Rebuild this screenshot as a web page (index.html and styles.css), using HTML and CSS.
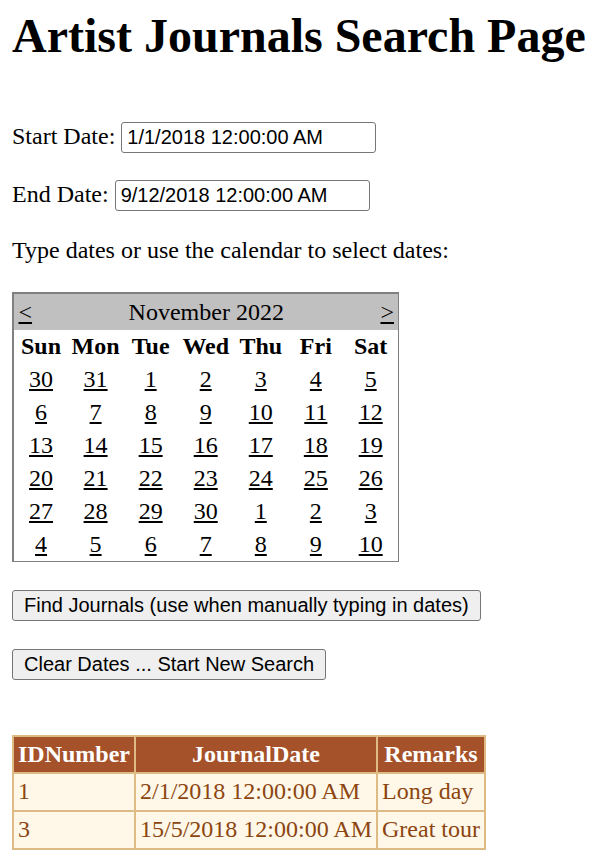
FILE: index.html
```html
<!DOCTYPE html>
<html>
<head>
<meta charset="utf-8">
<title>Artist Journals Search Page</title>
<link rel="stylesheet" href="styles.css">
</head>
<body>
<h1 class="title">Artist Journals Search Page</h1>
<p class="field field-start">Start Date: <input class="date-input" type="text" value="1/1/2018 12:00:00 AM"></p>
<p class="field field-end">End Date: <input class="date-input" type="text" value="9/12/2018 12:00:00 AM"></p>
<p class="hint">Type dates or use the calendar to select dates:</p>
<table class="calendar">
  <tr class="cal-title-row">
    <td colspan="7" class="cal-title">
      <div class="cal-title-inner">
        <a class="cal-link" href="#">&lt;</a>
        <span class="cal-month">November 2022</span>
        <a class="cal-link" href="#">&gt;</a>
      </div>
    </td>
  </tr>
  <tr class="cal-head">
    <th>Sun</th><th>Mon</th><th>Tue</th><th>Wed</th><th>Thu</th><th>Fri</th><th>Sat</th>
  </tr>
  <tr class="cal-week">
    <td><a class="cal-link" href="#">30</a></td><td><a class="cal-link" href="#">31</a></td><td><a class="cal-link" href="#">1</a></td><td><a class="cal-link" href="#">2</a></td><td><a class="cal-link" href="#">3</a></td><td><a class="cal-link" href="#">4</a></td><td><a class="cal-link" href="#">5</a></td>
  </tr>
  <tr class="cal-week">
    <td><a class="cal-link" href="#">6</a></td><td><a class="cal-link" href="#">7</a></td><td><a class="cal-link" href="#">8</a></td><td><a class="cal-link" href="#">9</a></td><td><a class="cal-link" href="#">10</a></td><td><a class="cal-link" href="#">11</a></td><td><a class="cal-link" href="#">12</a></td>
  </tr>
  <tr class="cal-week">
    <td><a class="cal-link" href="#">13</a></td><td><a class="cal-link" href="#">14</a></td><td><a class="cal-link" href="#">15</a></td><td><a class="cal-link" href="#">16</a></td><td><a class="cal-link" href="#">17</a></td><td><a class="cal-link" href="#">18</a></td><td><a class="cal-link" href="#">19</a></td>
  </tr>
  <tr class="cal-week">
    <td><a class="cal-link" href="#">20</a></td><td><a class="cal-link" href="#">21</a></td><td><a class="cal-link" href="#">22</a></td><td><a class="cal-link" href="#">23</a></td><td><a class="cal-link" href="#">24</a></td><td><a class="cal-link" href="#">25</a></td><td><a class="cal-link" href="#">26</a></td>
  </tr>
  <tr class="cal-week">
    <td><a class="cal-link" href="#">27</a></td><td><a class="cal-link" href="#">28</a></td><td><a class="cal-link" href="#">29</a></td><td><a class="cal-link" href="#">30</a></td><td><a class="cal-link" href="#">1</a></td><td><a class="cal-link" href="#">2</a></td><td><a class="cal-link" href="#">3</a></td>
  </tr>
  <tr class="cal-week">
    <td><a class="cal-link" href="#">4</a></td><td><a class="cal-link" href="#">5</a></td><td><a class="cal-link" href="#">6</a></td><td><a class="cal-link" href="#">7</a></td><td><a class="cal-link" href="#">8</a></td><td><a class="cal-link" href="#">9</a></td><td><a class="cal-link" href="#">10</a></td>
  </tr>
</table>
<div class="btn-row btn-row-first"><button class="btn" type="button">Find Journals (use when manually typing in dates)</button></div>
<div class="btn-row"><button class="btn" type="button">Clear Dates ... Start New Search</button></div>
<table class="grid">
  <tr class="grid-head">
    <th>IDNumber</th><th>JournalDate</th><th>Remarks</th>
  </tr>
  <tr class="grid-row">
    <td>1</td><td>2/1/2018 12:00:00 AM</td><td>Long day</td>
  </tr>
  <tr class="grid-row">
    <td>3</td><td>15/5/2018 12:00:00 AM</td><td>Great tour</td>
  </tr>
</table>
</body>
</html>
```
FILE: styles.css
```css
html, body {
  margin: 0;
  padding: 0;
  background: #ffffff;
}

body {
  padding: 0 12px;
  font-family: "Liberation Serif", "Times New Roman", serif;
  font-size: 24px;
  color: #000000;
}

.title {
  margin: 8px 0 0;
  font-size: 48px;
  font-weight: bold;
  line-height: 55px;
}

.field {
  margin: 0;
  white-space: nowrap;
}

.field-start {
  margin-top: 59px;
}

.field-end {
  margin-top: 27px;
}

.date-input {
  box-sizing: border-box;
  width: 255px;
  height: 31px;
  padding: 0 5px;
  border: 1px solid #767676;
  border-radius: 3px;
  font-family: "Liberation Sans", Arial, sans-serif;
  font-size: 20px;
  color: #000000;
  background: #ffffff;
  vertical-align: baseline;
}

.hint {
  margin: 26px 0 0;
}

.calendar {
  margin-top: 28px;
  width: 387px;
  table-layout: fixed;
  border-collapse: collapse;
  border-style: solid;
  border-color: #808080;
  border-width: 2px 1px 1px 2px;
}

.calendar td,
.calendar th {
  padding: 0;
  text-align: center;
}

.cal-title-row {
  height: 37px;
}

.cal-title {
  background: #c0c0c0;
}

.cal-title-inner {
  display: flex;
  justify-content: space-between;
  align-items: center;
  padding: 0 4px 0 4.5px;
}

.cal-head {
  height: 33px;
}

.cal-head th {
  font-weight: bold;
}

.cal-week {
  height: 33px;
}

.cal-link {
  color: #000000;
  text-decoration: underline;
}

.btn-row {
  margin-top: 28px;
}

.btn {
  box-sizing: border-box;
  height: 31px;
  padding: 0 11px;
  border: 1px solid #767676;
  border-radius: 3px;
  background: #efefef;
  font-family: "Liberation Sans", Arial, sans-serif;
  font-size: 20px;
  color: #000000;
}

.grid {
  margin-top: 55px;
  border-collapse: collapse;
  border: 2px solid #deba84;
}

.grid th,
.grid td {
  border: 2px solid #deba84;
  padding: 4px 4px;
}

.grid-head {
  background: #a55129;
  color: #ffffff;
}

.grid-head th {
  font-weight: bold;
  text-align: center;
}

.grid-row {
  background: #fff7e7;
  color: #8c4510;
}

.grid-row td {
  text-align: left;
  padding-top: 4.5px;
  padding-bottom: 4.5px;
}
```
